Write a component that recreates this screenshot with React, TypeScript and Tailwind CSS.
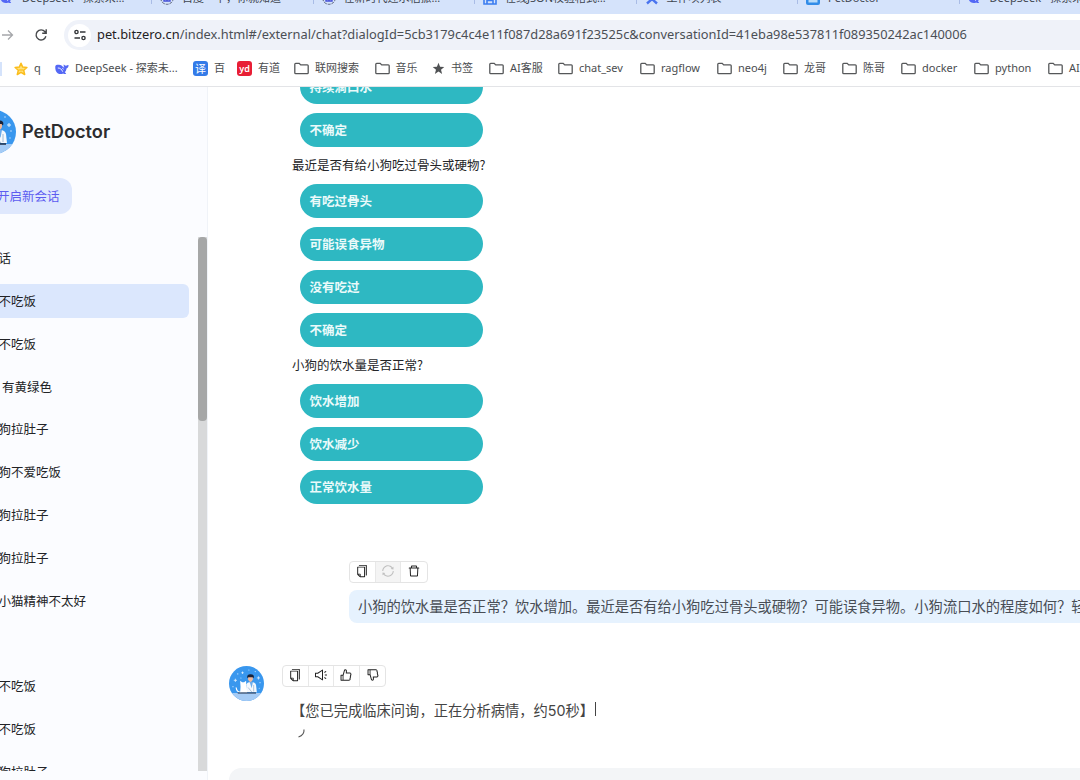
import clsx from "clsx";
import type { ReactNode } from "react";
import {
  AiOutlineCopy,
  AiOutlineDelete,
  AiOutlineDislike,
  AiOutlineLike,
  AiOutlineSound,
  AiOutlineSync,
} from "react-icons/ai";

type IconKind = "deepseek" | "baidu" | "json" | "work" | "pet";

interface Tab {
  icon: IconKind;
  title: string;
}

interface Bookmark {
  icon: ReactNode;
  label: string;
  width: string;
}

interface Question {
  title?: string;
  options: string[];
}

const TABS: Tab[] = [
  { icon: "deepseek", title: "DeepSeek - 探索未…" },
  { icon: "baidu", title: "百度一下，你就知道" },
  { icon: "baidu", title: "在新时代迎水稻振…" },
  { icon: "json", title: "在线JSON校验格式…" },
  { icon: "work", title: "工作项列表" },
  { icon: "pet", title: "PetDoctor" },
  { icon: "deepseek", title: "DeepSeek - 探索未…" },
];

const QUESTIONS: Question[] = [
  { options: ["持续滴口水", "不确定"] },
  {
    title: "最近是否有给小狗吃过骨头或硬物?",
    options: ["有吃过骨头", "可能误食异物", "没有吃过", "不确定"],
  },
  {
    title: "小狗的饮水量是否正常?",
    options: ["饮水增加", "饮水减少", "正常饮水量"],
  },
];

const CONVERSATIONS = [
  "话",
  "不吃饭",
  "不吃饭",
  "有黄绿色",
  "狗拉肚子",
  "狗不爱吃饭",
  "狗拉肚子",
  "狗拉肚子",
  "小猫精神不太好",
  "",
  "不吃饭",
  "不吃饭",
  "狗拉肚子",
];

function Whale({ className }: { className?: string }) {
  return (
    <svg viewBox="0 0 14 14" className={className} fill="#5468f5">
      <path d="M.3 4.200C.8 2.700 2.500 2.600 4.100 2.800c1.500.200 2.600.600 3.500 1.700.7.800 1.200 1.200 1.800 1.100-.9-1-.9-2.300-.5-3.300.5 1.100 1.300 1.500 2.200 1.400.8-.1 1.400-.7 2.400-.6.2 1.800-.7 3.200-2 3.400-.2 1.700-.8 2.900-1.700 3.800l1.400 1.200c-.9.800-2.100.7-3-.1C5.300 12.900 1.700 11.600.7 8.400.3 7 .1 5.600.3 4.200Z" />
      <path d="M2.800 6c2-.2 3.900 1.100 4.900 3.700M7.300 6.300l1.300.9" stroke="#fff" strokeWidth=".9" fill="none" />
    </svg>
  );
}

function Folder() {
  return (
    <svg viewBox="0 0 15 13" className="h-[13px] w-[15px]" fill="none" stroke="#555759" strokeWidth="1.3">
      <path d="M.8 10.700V2.200Q.8 1.300 1.700 1.300H5.200L6.700 2.900H13.300Q14.200 2.900 14.200 3.800V10.700Q14.200 11.600 13.300 11.600H1.700Q.8 11.600.8 10.700Z" />
    </svg>
  );
}

function OutlineStar() {
  return (
    <svg viewBox="0 0 14 14" className="size-[14px]" fill="#ffe27a" stroke="#fbbd1c" strokeLinejoin="round" strokeWidth="1.500">
      <path d="M7 1.200 8.700 5.100 12.900 5.500 9.700 8.300 10.700 12.500 7 10.300 3.300 12.500 4.300 8.300 1.100 5.500 5.300 5.100Z" />
      <path d="M5 8h4" strokeWidth="1.200" />
    </svg>
  );
}

function Star() {
  return (
    <svg viewBox="0 0 14 14" className="size-[13px]" fill="#505254">
      <path d="M7 .9 8.700 5.100 13.200 5.400 9.700 8.300 10.900 12.800 7 10.300 3.100 12.800 4.300 8.300.8 5.400 5.300 5.100Z" />
    </svg>
  );
}

function Badge({ text, className }: { text: string; className: string }) {
  return (
    <span className={clsx("flex size-[15px] items-center justify-center rounded-[3px] text-white leading-none", className)}>
      {text}
    </span>
  );
}

const BOOKMARKS: Bookmark[] = [
  { icon: <OutlineStar />, label: "q", width: "w-[41px]" },
  { icon: <Whale className="size-[14px]" />, label: "DeepSeek - 探索未...", width: "w-[138px]" },
  { icon: <Badge text="译" className="bg-[#347be8] text-[11px]" />, label: "百", width: "w-[44px]" },
  { icon: <Badge text="yd" className="bg-[#e81e35] pb-px text-[9px] font-semibold" />, label: "有道", width: "w-[57px]" },
  { icon: <Folder />, label: "联网搜索", width: "w-[80.500px]" },
  { icon: <Folder />, label: "音乐", width: "w-[57.500px]" },
  { icon: <Star />, label: "书签", width: "w-[57px]" },
  { icon: <Folder />, label: "AI客服", width: "w-[69px]" },
  { icon: <Folder />, label: "chat_sev", width: "w-[82px]" },
  { icon: <Folder />, label: "ragflow", width: "w-[77px]" },
  { icon: <Folder />, label: "neo4j", width: "w-[66px]" },
  { icon: <Folder />, label: "龙哥", width: "w-[59px]" },
  { icon: <Folder />, label: "陈哥", width: "w-[59px]" },
  { icon: <Folder />, label: "docker", width: "w-[73px]" },
  { icon: <Folder />, label: "python", width: "w-[74px]" },
  { icon: <Folder />, label: "AI", width: "w-[60px]" },
];

function PetAvatar({ className }: { className?: string }) {
  return (
    <svg viewBox="0 0 44 44" className={className}>
      <defs>
        <clipPath id="avatar">
          <circle cx="22" cy="22" r="22" />
        </clipPath>
      </defs>
      <g clipPath="url(#avatar)">
        <path d="M0 0H44V44H0Z" fill="#3997ee" />
        <path d="M0 34H44V44H0Z" fill="#a5cbf5" />
        <path d="M8 16v4M6 18h4M37 13v4M35 15h4M17 7v3M15.500 8.500h3" stroke="#e6f3ff" strokeWidth="1" />
        <g fill="#bfe0ff">
          <circle cx="11" cy="10" r=".8" />
          <circle cx="25" cy="5" r=".7" />
          <circle cx="33" cy="7" r=".8" />
          <circle cx="39" cy="21" r=".8" />
          <circle cx="38" cy="28" r=".7" />
          <circle cx="5" cy="26" r=".8" />
          <circle cx="15" cy="15" r=".7" />
        </g>
        <path d="M21 33 22 23Q23 20 28 20 33 20 34 24L35 33Z" fill="#f4f8fd" />
        <path d="M26 20h4l-1.500 8Z" fill="#6cabea" />
        <path d="M24 13h6v4q-1 3-3 3T24 17Z" fill="#efb99c" />
        <path d="M23 15.500q-1-5 4-5 5.500 0 4 5l-1.500-1.500h-5Z" fill="#17233c" />
        <path d="M14 33.500 14.500 26 14 18.500l2.500 2h2.500l2.500-2 .3 7.500 1 7.500Z" fill="#fff" />
        <path d="M15 33Q9.500 33 9 27" stroke="#fff" strokeWidth="1.500" fill="none" />
        <path d="M24 27 29 33M31 24v8" stroke="#89a8c9" strokeWidth=".8" />
        <path d="M11 34H34" stroke="#1d2b45" strokeWidth="1.300" />
      </g>
    </svg>
  );
}

function TabIcon({ kind }: { kind: IconKind }) {
  switch (kind) {
    case "deepseek":
      return <Whale className="size-[14px]" />;
    case "baidu":
      return (
        <svg viewBox="0 0 14 14" className="size-[14px]" fill="none" stroke="#4651d8">
          <circle cx="7" cy="7" r="6.300" strokeDasharray="3 1" stroke="#59617b" />
          <path d="M4 10V7.500L7 5l3 2.500V10ZM7 7v3" strokeWidth="1.400" />
        </svg>
      );
    case "json":
      return (
        <svg viewBox="0 0 14 14" className="size-[14px]" fill="none" stroke="#3c7df0" strokeWidth="1.600">
          <path d="M1 1h12v12H1ZM4 13V9.500H10V13" />
        </svg>
      );
    case "work":
      return (
        <svg viewBox="0 0 14 14" className="size-[14px]" fill="none" stroke="#4a74ef" strokeWidth="2.400">
          <path d="M3 2 7 8 11 2M2 12.500 7 8l5 4.500" />
        </svg>
      );
    case "pet":
      return (
        <svg viewBox="0 0 14 14" className="size-[14px]">
          <rect width="14" height="14" rx="2" fill="#318ce8" />
          <path d="M2.500 8h9v3.500h-9Z" fill="#b9dcfa" />
        </svg>
      );
  }
}

function BrowserChrome() {
  return (
    <header className="flex h-[87px] shrink-0 flex-col border-b border-[#e3e4e7] bg-white font-['Noto_Sans','Noto_Sans_CJK_SC',sans-serif]">
      <div className="flex h-[14px] items-end overflow-hidden bg-[#d5e3fb]">
        {TABS.map((tab, i) => (
          <div
            key={i}
            className={clsx(
              "flex h-[28px] shrink-0 items-start gap-2 text-[11px] leading-[14px] text-[#3f4650]",
              i === 0 ? "w-[152px]" : "w-[161.500px] pl-[8px]"
            )}
          >
            <div className="mt-[5px] shrink-0">
              <TabIcon kind={tab.icon} />
            </div>
            <span className="mt-[5px] flex-1 whitespace-nowrap">{tab.title}</span>
            <span className="mt-1 h-[14px] w-px bg-[#a9bce6]" />
          </div>
        ))}
      </div>

      <div className="flex h-[42px] items-center">
        <svg viewBox="0 0 14 14" className="-ml-px h-[14px] w-[18px] shrink-0" fill="none" stroke="#a5a7aa" strokeWidth="1.300">
          <path d="M1 7H11.500M7 2.500 11.500 7 7 11.500" />
        </svg>
        <svg viewBox="0 0 14 14" className="ml-[17px] size-[14px] shrink-0" fill="none" stroke="#46484b" strokeWidth="1.400">
          <path d="M11.900 8.300A5 5 0 1 1 11 3.800L12 5M12.200 1.300V5.300H8.200" />
        </svg>
        <div className="ml-[16px] flex h-[30px] flex-1 items-center rounded-l-full bg-[#eff2f9]">
          <div className="ml-[4px] flex size-[23px] items-center justify-center rounded-full bg-white">
            <svg viewBox="0 0 12 12" className="size-[12px]" fill="none" stroke="#35373a" strokeWidth="1.400">
              <circle cx="2.500" cy="3" r="1.600" />
              <circle cx="9.500" cy="9" r="1.600" />
              <path d="M6 3h5.500M.5 9H6" />
            </svg>
          </div>
          <div className="ml-[6px] whitespace-nowrap text-[12.830px] text-[#4b4f55]">
            <span className="text-[#1f2124]">pet.bitzero.cn</span>
            /index.html#/external/chat?dialogId=5cb3179c4c4e11f087d28a691f23525c&amp;conversationId=41eba98e537811f089350242ac140006
          </div>
        </div>
      </div>

      <nav className="mt-px flex h-[23px] items-center overflow-hidden text-[11px] text-[#4b4d50]">
        <span className="mr-[12px] h-[14px] w-[2px] shrink-0 bg-[#d5e3fb]" />
        {BOOKMARKS.map((bookmark) => (
          <div key={bookmark.label} className={clsx("flex shrink-0 items-center gap-[6px] whitespace-nowrap", bookmark.width)}>
            {bookmark.icon}
            <span>{bookmark.label}</span>
          </div>
        ))}
      </nav>
    </header>
  );
}

function Sidebar() {
  return (
    <aside className="flex w-[208px] shrink-0 flex-col overflow-hidden border-r border-[#f0f3f8] bg-[#fbfcff] text-[12.500px]">
      <div className="mt-[23px] flex h-[44px] items-center">
        <PetAvatar className="-ml-[28px] size-[44px] shrink-0" />
        <h1 className="ml-[6px] font-['Inter',sans-serif] text-[18.200px] font-semibold text-[#2d2d2f]">PetDoctor</h1>
      </div>
      <button
        type="button"
        className="mt-[24px] flex h-[36px] w-[72px] shrink-0 items-center rounded-r-[12px] bg-[#dfe8fd] whitespace-nowrap text-[#5d5cf0]"
      >
        <span className="-ml-[3px]">开启新会话</span>
      </button>
      <div className="mt-[23px] mb-[9px] flex min-h-0 flex-1">
        <ul className="flex w-[198px] shrink-0 flex-col gap-[8.850px] overflow-hidden pt-[4.400px] text-[#222326]">
          {CONVERSATIONS.map((title, i) => (
            <li
              key={i}
              className={clsx(
                "flex h-[34px] w-[189px] shrink-0 items-center rounded-r-[6px]",
                i === 1 && "bg-[#dbe7fd]"
              )}
            >
              <span className={i === 3 ? "ml-[2px]" : "-ml-[1.500px]"}>{title}</span>
            </li>
          ))}
        </ul>
        <div className="w-[9px] bg-[#d8d9da]">
          <div className="h-[184px] rounded-[4px] bg-[#a6a7a7]" />
        </div>
      </div>
    </aside>
  );
}

function ActionBar({ children }: { children: ReactNode }) {
  return (
    <div className="flex h-[22px] w-fit divide-x divide-[#e8e8e8] overflow-hidden rounded-[4px] border border-[#e4e4e4] bg-white text-[14px] text-[#222]">
      {children}
    </div>
  );
}

function Action({ children, disabled }: { children: ReactNode; disabled?: boolean }) {
  return (
    <button
      type="button"
      disabled={disabled}
      className="flex w-[25.600px] items-center justify-center pb-[2px] disabled:bg-[#f4f4f4] disabled:text-[#bfbfbf]"
    >
      {children}
    </button>
  );
}

function QuestionList() {
  return (
    <div className="ml-[84px] text-[12.500px]">
      {QUESTIONS.map((question, i) => (
        <section key={i}>
          {question.title && (
            <p className="flex h-[28.500px] items-start leading-[18px] text-[#242528]">{question.title}</p>
          )}
          <div className="ml-[8px] flex flex-col">
            {question.options.map((option) => (
              <button
                key={option}
                type="button"
                className="mb-[8.900px] h-[34px] w-[182.500px] rounded-full bg-[#2eb8c2] pl-[9.500px] text-left font-semibold text-[#eafafa]"
              >
                {option}
              </button>
            ))}
          </div>
        </section>
      ))}
    </div>
  );
}

export default function App() {
  return (
    <div className="flex h-[780px] w-[1080px] flex-col overflow-hidden bg-white font-['Noto_Sans_CJK_SC',sans-serif]">
      <BrowserChrome />
      <div className="flex min-h-0 flex-1">
        <Sidebar />
        <main className="flex min-w-0 flex-1 flex-col overflow-hidden">
          <div className="-mt-[17px]">
            <QuestionList />
          </div>

          <div className="mt-[48px] ml-[141px]">
            <ActionBar>
              <Action><AiOutlineCopy /></Action>
              <Action disabled><AiOutlineSync /></Action>
              <Action><AiOutlineDelete /></Action>
            </ActionBar>
            <div className="mt-[7px] flex h-[33px] items-center rounded-l-[8px] bg-[#e6f2fe] pb-[2px] pl-[9px] text-[14.280px] whitespace-nowrap text-[#484d55]">
              小狗的饮水量是否正常？饮水增加。最近是否有给小狗吃过骨头或硬物？可能误食异物。小狗流口水的程度如何？轻微
            </div>
          </div>

          <div className="mt-[42px] ml-[21px] flex">
            <PetAvatar className="mt-px size-[35px]" />
            <div className="ml-[18px]">
              <ActionBar>
                <Action><AiOutlineCopy /></Action>
                <Action><AiOutlineSound /></Action>
                <Action><AiOutlineLike /></Action>
                <Action><AiOutlineDislike /></Action>
              </ActionBar>
              <div className="mt-[12px] ml-[9px] flex h-[22px] items-center text-[14.280px] whitespace-nowrap text-[#444]">
                <span>
                  【您已完成临床问询，正在分析病情，约
                  <span className="font-['Inter',sans-serif]">50</span>
                  秒】
                </span>
                <span className="-mt-[2px] ml-px h-[14px] w-px bg-[#444]" />
              </div>
              <svg viewBox="0 0 8 9" className="mt-[8px] ml-[16px] h-[9px] w-[8px]" fill="none" stroke="#555" strokeWidth="1.100">
                <path d="M6 .5Q6.500 6 .5 8" />
              </svg>
            </div>
          </div>

          <div className="mt-auto ml-[21px] h-[12px] shrink-0 rounded-tl-[16px] bg-[#f3f5f7]" />
        </main>
      </div>
    </div>
  );
}
